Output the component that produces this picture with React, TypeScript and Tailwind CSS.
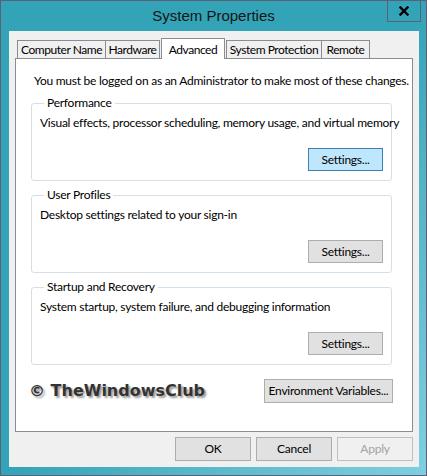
import type { ReactNode } from 'react';

const tabs = [
  { name: 'Computer Name', cls: 'w-[89px]' },
  { name: 'Hardware', cls: 'w-[55px] -ml-px' },
  { name: 'Advanced', cls: 'w-[64px] ml-px', active: true },
  { name: 'System Protection', cls: 'w-[96px] ml-px' },
  { name: 'Remote', cls: 'w-[49px] -ml-px' },
];

const groups = [
  {
    title: 'Performance',
    text: 'Visual effects, processor scheduling, memory usage, and virtual memory',
    focused: true,
  },
  { title: 'User Profiles', text: 'Desktop settings related to your sign-in' },
  { title: 'Startup and Recovery', text: 'System startup, system failure, and debugging information' },
];

function Button({
  children,
  className = '',
  variant = 'normal',
}: {
  children: ReactNode;
  className?: string;
  variant?: 'normal' | 'focused' | 'disabled';
}) {
  const look =
    variant === 'focused'
      ? 'border-[#3c7fb1] bg-[#bee6fd] text-black'
      : variant === 'disabled'
        ? 'border-[#bfbfbf] bg-[#f0f0f0] text-[#a3a3a3]'
        : 'border-[#adadad] bg-[#e1e1e1] text-black';
  return (
    <button className={`flex items-center justify-center whitespace-nowrap border leading-4 ${look} ${className}`}>
      {children}
    </button>
  );
}

export default function App() {
  return (
    <div className="h-[476px] w-[427px] bg-[#5b6172] p-px font-['Lato','Liberation_Sans',sans-serif] text-[12px] tracking-[-0.25px] text-black">
      <div className="flex h-full flex-col bg-gradient-to-br from-[#33a3b7] via-[#33a3b7] to-[#7fcfe0]">
        {/* Title bar */}
        <div className="relative flex h-[30px] items-center justify-center">
          <span className="pt-px font-['Liberation_Sans',Arial,sans-serif] text-[15px] tracking-normal text-[#151515]">
            System Properties
          </span>
          <button className="absolute -top-px right-[5px] flex h-[22px] w-[34px] items-center justify-center border border-t-0 border-[#5b6172]">
            <svg width="10" height="10" viewBox="0 0 10 10">
              <path d="M1.5 1.5 L8.5 8.5 M8.5 1.5 L1.5 8.5" stroke="#000" strokeWidth="2.4" strokeLinecap="square" />
            </svg>
          </button>
        </div>

        {/* Client area */}
        <div className="ml-[8px] flex h-[436px] w-[410px] flex-col bg-[#f0f0f0] px-[6px] pt-[7px]">
          {/* Tabs */}
          <div className="relative z-10 -mb-px ml-[2px] flex h-[21px] items-end whitespace-nowrap tracking-[-0.45px]">
            {tabs.map((t) =>
              t.active ? (
                <div
                  key={t.name}
                  className={`flex h-[21px] items-start justify-center border border-b-0 border-[#898c95] bg-white pt-[2px] ${t.cls}`}
                >
                  {t.name}
                </div>
              ) : (
                <div
                  key={t.name}
                  className={`flex h-[19px] items-center justify-center border border-[#898c95] bg-[#f0f0f0] ${t.cls}`}
                >
                  {t.name}
                </div>
              ),
            )}
          </div>

          {/* Tab panel */}
          <div className="flex h-[374px] flex-col whitespace-nowrap border border-[#898c95] bg-white pl-[15px] pr-[20px]">
            <p className="ml-[3px] mt-[14px] leading-4">
              You must be logged on as an Administrator to make most of these changes.
            </p>

            {groups.map((g) => (
              <fieldset
                key={g.title}
                className="mt-[6px] min-w-0 rounded-[3px] border border-[#d5dfe5] pb-[9px] pl-[8px] pr-[8px]"
              >
                <legend className="ml-[4px] px-[3px] leading-4">{g.title}</legend>
                <p className="mt-[4px] leading-4">{g.text}</p>
                <div className="mt-[17px] flex justify-end">
                  <Button variant={g.focused ? 'focused' : 'normal'} className="h-[23px] w-[75px]">
                    Settings...
                  </Button>
                </div>
              </fieldset>
            ))}

            <div className="mt-[14px] flex items-center justify-between">
              <span className="-ml-[2px] font-['DejaVu_Sans',Verdana,sans-serif] text-[16px] font-bold tracking-normal text-[#333] [text-shadow:2px_2px_2px_#999]">
                © TheWindowsClub
              </span>
              <Button className="-mr-px h-[24px] w-[129px]">Environment Variables...</Button>
            </div>
          </div>

          {/* Dialog buttons */}
          <div className="mt-[5px] flex justify-end gap-[5px]">
            <Button className="h-[24px] w-[76px]">OK</Button>
            <Button className="h-[24px] w-[76px]">Cancel</Button>
            <Button variant="disabled" className="h-[24px] w-[76px]">
              Apply
            </Button>
          </div>
        </div>
      </div>
    </div>
  );
}
